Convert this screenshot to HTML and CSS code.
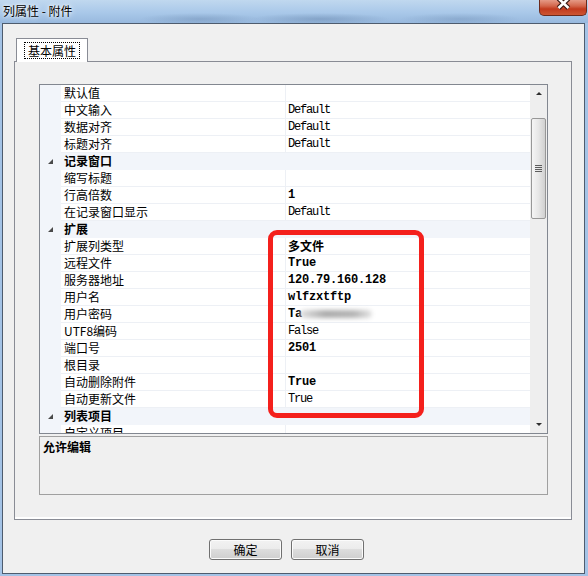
FILE: index.html
```html
<!DOCTYPE html>
<html lang="zh-CN">
<head>
  <meta charset="UTF-8" />
  <meta name="viewport" content="width=device-width, initial-scale=1.0"/>
  <title>列属性 - 附件</title>
  <link rel="stylesheet" href="styles.css">
</head>
<body>

<div class="titlebar">
  <span class="title">列属性 - 附件</span>
  <button class="close-btn" title="关闭">
    <svg width="46" height="15" viewBox="0 0 46 15">
      <path d="M18.5 -1.5 L28.5 8 M28.5 -1.5 L18.5 8" stroke="#3a1a14" stroke-width="5" fill="none"/>
      <path d="M18.5 -1.5 L28.5 8 M28.5 -1.5 L18.5 8" stroke="#fff" stroke-width="2.6" fill="none"/>
    </svg>
  </button>
</div>

<div class="client">
  <div class="tabs">
    <div class="tabstrip">
      <div class="tab"><span class="focus">基本属性</span></div>
    </div>

    <div class="panel">
      <div class="grid">
        <div class="rows">
          <div class="row"><span class="m"></span><span class="k">默认值</span><span class="v"></span></div>
          <div class="row"><span class="m"></span><span class="k">中文输入</span><span class="v">Default</span></div>
          <div class="row"><span class="m"></span><span class="k">数据对齐</span><span class="v">Default</span></div>
          <div class="row"><span class="m"></span><span class="k">标题对齐</span><span class="v">Default</span></div>
          <div class="row cat"><span class="m"><i class="tri"></i></span><span class="k">记录窗口</span></div>
          <div class="row"><span class="m"></span><span class="k">缩写标题</span><span class="v"></span></div>
          <div class="row"><span class="m"></span><span class="k">行高倍数</span><span class="v b">1</span></div>
          <div class="row"><span class="m"></span><span class="k">在记录窗口显示</span><span class="v">Default</span></div>
          <div class="row cat"><span class="m"><i class="tri"></i></span><span class="k">扩展</span></div>
          <div class="row"><span class="m"></span><span class="k">扩展列类型</span><span class="v b"><span class="cjk">多文件</span></span></div>
          <div class="row"><span class="m"></span><span class="k">远程文件</span><span class="v b">True</span></div>
          <div class="row"><span class="m"></span><span class="k">服务器地址</span><span class="v b">120.79.160.128</span></div>
          <div class="row"><span class="m"></span><span class="k">用户名</span><span class="v b">wlfzxtftp</span></div>
          <div class="row"><span class="m"></span><span class="k">用户密码</span><span class="v b">Ta<span class="blur"></span></span></div>
          <div class="row"><span class="m"></span><span class="k">UTF8编码</span><span class="v">False</span></div>
          <div class="row"><span class="m"></span><span class="k">端口号</span><span class="v b">2501</span></div>
          <div class="row"><span class="m"></span><span class="k">根目录</span><span class="v"></span></div>
          <div class="row"><span class="m"></span><span class="k">自动删除附件</span><span class="v b">True</span></div>
          <div class="row"><span class="m"></span><span class="k">自动更新文件</span><span class="v">True</span></div>
          <div class="row cat"><span class="m"><i class="tri"></i></span><span class="k">列表项目</span></div>
          <div class="row"><span class="m"></span><span class="k">自定义项目</span><span class="v"></span></div>
        </div>

        <div class="scrollbar">
          <div class="sb-btn"><i class="arrow-up"></i></div>
          <div class="thumb"><i class="grip"></i></div>
          <div class="sb-track"></div>
          <div class="sb-btn"><i class="arrow-down"></i></div>
        </div>

        <div class="mark"></div>
      </div>

      <div class="desc">允许编辑</div>
    </div>
  </div>

  <div class="buttons">
    <button class="btn">确定</button>
    <button class="btn">取消</button>
  </div>
</div>

</body>
</html>
```

FILE: styles.css
```css
* { box-sizing: border-box; }
body {
  margin: 0;
  width: 588px;
  height: 576px;
  overflow: hidden;
  background: #a4c3e6;
  font-family: "Noto Sans CJK SC", "DejaVu Sans", sans-serif;
  font-size: 12px;
  color: #000;
}

/* window caption */
.titlebar {
  height: 23px;
  display: flex;
  justify-content: space-between;
  align-items: flex-start;
  background:
    radial-gradient(ellipse 60px 6px at 200px 19px, rgba(70,100,140,.25), transparent),
    radial-gradient(ellipse 70px 6px at 320px 19px, rgba(70,100,140,.3), transparent),
    radial-gradient(ellipse 60px 6px at 460px 19px, rgba(70,100,140,.22), transparent),
    linear-gradient(#c0d8ef, #a9c8e9 55%, #98b9de);
}
.title {
  padding: 3px 0 0 3px;
  line-height: 16px;
  text-shadow: 0 0 6px #fff, 0 0 3px #fff;
}
.close-btn {
  display: block;
  width: 48px;
  height: 16px;
  margin-right: 1px;
  padding: 0;
  border: 1px solid #6b2a1c;
  border-top: none;
  border-radius: 0 0 5px 5px;
  background: linear-gradient(#e59a86, #d3664b 40%, #c23a1d 60%, #cc5632);
}
.close-btn svg { display: block; }

/* client area */
.client {
  margin-left: 2px;
  width: 583px;
  height: 551px;
  border: 1px solid #4e5c6e;
  background: #f0f0f0;
}
.tabs {
  width: 558px;
  margin: 14px 0 0 11px;
}
.tabstrip {
  display: flex;
  padding-left: 2px;
}
.tab {
  position: relative;
  z-index: 1;
  width: 72px;
  height: 24px;
  margin-bottom: -1px;
  padding: 3px 0 0 7px;
  border: 1px solid #898c95;
  border-bottom: none;
  background: #fff;
}
.tab .focus {
  display: inline-block;
  padding: 0 3px;
  border: 1px dotted #000;
  line-height: 15px;
}
.panel {
  height: 459px;
  padding: 22px 0 0 24px;
  border: 1px solid #898c95;
  background: #f0f0f0;
  box-shadow: inset 0 -2px 0 #fff;
}

/* property grid */
.grid {
  position: relative;
  display: flex;
  width: 509px;
  height: 350px;
  border: 1px solid #828790;
  background: #fff;
}
.rows {
  width: 490px;
  height: 348px;
  overflow: hidden;
}
.row {
  display: flex;
  height: 17px;
  line-height: 16px;
  white-space: nowrap;
}
.row .m {
  width: 21px;
  flex-shrink: 0;
  background: #f2f5fa;
}
.row .k {
  width: 225px;
  padding-left: 3px;
  border-right: 1px solid #edf0f5;
  border-bottom: 1px solid #edf0f5;
}
.row .v {
  flex: 1;
  padding-left: 2px;
  border-bottom: 1px solid #edf0f5;
  font-family: "Liberation Mono", "Noto Sans CJK SC", monospace;
  font-size: 12px;
  letter-spacing: -1.2px;
}
.row .v.b {
  font-weight: bold;
  letter-spacing: -0.2px;
}
.row .v .cjk {
  font-family: "Noto Sans CJK SC", sans-serif;
  letter-spacing: 0;
}
.row.cat { background: #f2f5fa; }
.row.cat .k {
  flex: 1;
  border: none;
  font-weight: bold;
}
.tri {
  display: block;
  width: 0;
  height: 0;
  margin: 6px 0 0 8px;
  border-left: 5px solid transparent;
  border-bottom: 5px solid #4a4a4a;
}
.blur {
  display: inline-block;
  width: 72px;
  height: 8px;
  margin-left: -2px;
  vertical-align: middle;
  border-radius: 4px;
  background: linear-gradient(to right, #e2e2e2, #acacac 35%, #b4b4b4 75%, #e4e4e4);
  filter: blur(2px);
}

.scrollbar {
  display: flex;
  flex-direction: column;
  width: 17px;
  height: 348px;
  background: #eeeeee;
}
.sb-btn {
  height: 17px;
  display: flex;
  align-items: center;
  justify-content: center;
}
.sb-track { flex: 1; }
.arrow-up, .arrow-down {
  width: 0;
  height: 0;
  border-left: 3px solid transparent;
  border-right: 3px solid transparent;
}
.arrow-up { border-bottom: 3px solid #2e2e2e; }
.arrow-down { border-top: 3px solid #2e2e2e; }
.thumb {
  display: flex;
  align-items: center;
  justify-content: center;
  height: 101px;
  margin: 16px 1px 0;
  border: 1px solid #979797;
  border-radius: 2px;
  background: linear-gradient(to right, #f5f5f5, #e6e6e6 50%, #d0d0d0);
}
.grip {
  width: 7px;
  height: 8px;
  background: repeating-linear-gradient(#5c5c5c 0 1px, transparent 1px 2px);
}

.mark {
  position: absolute;
  left: 228px;
  top: 145px;
  width: 156px;
  height: 188px;
  border: 5px solid #f4201c;
  border-radius: 9px;
  pointer-events: none;
}

.desc {
  width: 509px;
  height: 59px;
  margin-top: 2px;
  padding: 2px 0 0 3px;
  border: 1px solid #a0a0a0;
  font-weight: bold;
  line-height: 15px;
}

/* dialog buttons */
.buttons {
  display: flex;
  gap: 9px;
  margin: 19px 0 0 206px;
}
.btn {
  width: 73px;
  height: 21px;
  padding: 0;
  border: 1px solid #707070;
  border-radius: 3px;
  background: linear-gradient(#f2f2f2, #ebebeb 50%, #dddddd 50%, #cfcfcf);
  box-shadow: inset 0 0 0 1px #fbfbfb;
  font: 12px "Noto Sans CJK SC", sans-serif;
  color: #000;
}
```
